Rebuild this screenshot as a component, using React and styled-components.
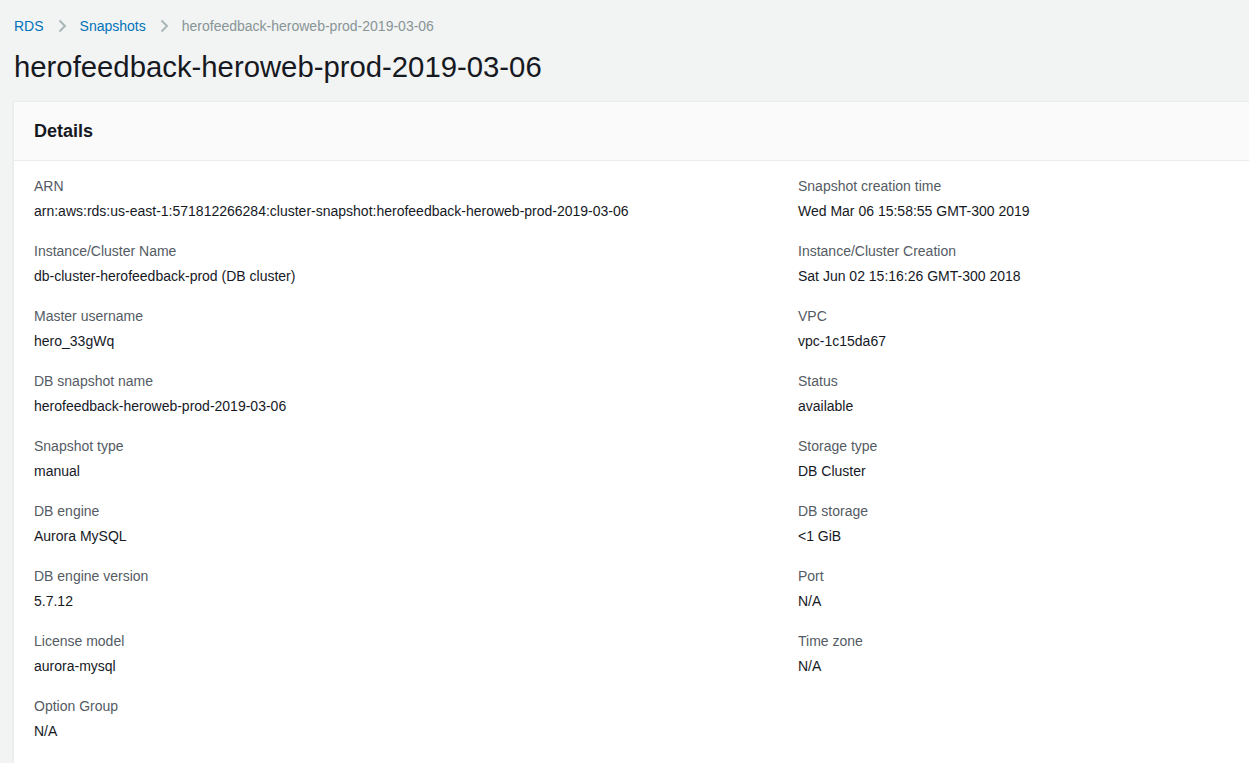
import React from "react";
import styled, { createGlobalStyle } from "styled-components";

const GlobalStyle = createGlobalStyle`
  html, body {
    margin: 0;
    padding: 0;
    background: #f2f3f3;
    overflow: hidden;
  }
  body {
    font-family: "Liberation Sans", Arial, sans-serif;
    color: #16191f;
  }
`;

const Page = styled.div`
  width: 1270px;
  padding: 0 0 0 13px;
`;

const Breadcrumbs = styled.nav`
  display: flex;
  align-items: center;
  height: 20px;
  padding: 16px 0 0 1px;
  font-size: 14px;
`;

const Crumb = styled.a`
  color: #0073bb;
  text-decoration: none;
`;

const Current = styled.span`
  color: #879596;
`;

const Chevron = styled.svg`
  width: 14px;
  height: 14px;
  margin: 0 11px;
`;

const Title = styled.h1`
  margin: 0;
  padding: 10px 0 0 1px;
  font-size: 29.3px;
  font-weight: 400;
  line-height: 41px;
  color: #16191f;
`;

const Card = styled.section`
  margin-top: 14px;
  background: #fff;
  border: 1px solid #eaeded;
  box-shadow: 0 1px 1px rgba(0, 28, 36, 0.15);
`;

const CardHeader = styled.header`
  display: flex;
  align-items: center;
  height: 58px;
  padding: 0 20px;
  background: #fafafa;
  border-bottom: 1px solid #eaeded;
`;

const CardTitle = styled.h2`
  margin: 0;
  font-size: 18px;
  font-weight: 700;
  color: #16191f;
`;

const Grid = styled.div`
  display: grid;
  grid-template-columns: 764px 1fr;
  padding: 16px 20px 20px;
`;

const Field = styled.div`
  display: flex;
  flex-direction: column;
  height: 65px;
`;

const Label = styled.div`
  font-size: 14px;
  line-height: 18px;
  color: #545b64;
`;

const Value = styled.div`
  margin-top: 7px;
  font-size: 14px;
  line-height: 18px;
  color: #16191f;
`;

const left = [
  ["ARN", "arn:aws:rds:us-east-1:571812266284:cluster-snapshot:herofeedback-heroweb-prod-2019-03-06"],
  ["Instance/Cluster Name", "db-cluster-herofeedback-prod (DB cluster)"],
  ["Master username", "hero_33gWq"],
  ["DB snapshot name", "herofeedback-heroweb-prod-2019-03-06"],
  ["Snapshot type", "manual"],
  ["DB engine", "Aurora MySQL"],
  ["DB engine version", "5.7.12"],
  ["License model", "aurora-mysql"],
  ["Option Group", "N/A"],
];

const right = [
  ["Snapshot creation time", "Wed Mar 06 15:58:55 GMT-300 2019"],
  ["Instance/Cluster Creation", "Sat Jun 02 15:16:26 GMT-300 2018"],
  ["VPC", "vpc-1c15da67"],
  ["Status", "available"],
  ["Storage type", "DB Cluster"],
  ["DB storage", "<1 GiB"],
  ["Port", "N/A"],
  ["Time zone", "N/A"],
];

function ChevronIcon() {
  return (
    <Chevron viewBox="0 0 14 14">
      <path d="M4.5 1.5 L10 7 L4.5 12.5" fill="none" stroke="#aab7b8" strokeWidth="2" />
    </Chevron>
  );
}

export default function App() {
  const rows = [];
  for (let i = 0; i < left.length; i++) {
    rows.push(
      <Field key={"l" + i}>
        <Label>{left[i][0]}</Label>
        <Value>{left[i][1]}</Value>
      </Field>
    );
    rows.push(
      <Field key={"r" + i}>
        {right[i] && (
          <>
            <Label>{right[i][0]}</Label>
            <Value>{right[i][1]}</Value>
          </>
        )}
      </Field>
    );
  }

  return (
    <Page>
      <GlobalStyle />
      <Breadcrumbs>
        <Crumb href="#">RDS</Crumb>
        <ChevronIcon />
        <Crumb href="#">Snapshots</Crumb>
        <ChevronIcon />
        <Current>herofeedback-heroweb-prod-2019-03-06</Current>
      </Breadcrumbs>
      <Title>herofeedback-heroweb-prod-2019-03-06</Title>
      <Card>
        <CardHeader>
          <CardTitle>Details</CardTitle>
        </CardHeader>
        <Grid>{rows}</Grid>
      </Card>
    </Page>
  );
}
